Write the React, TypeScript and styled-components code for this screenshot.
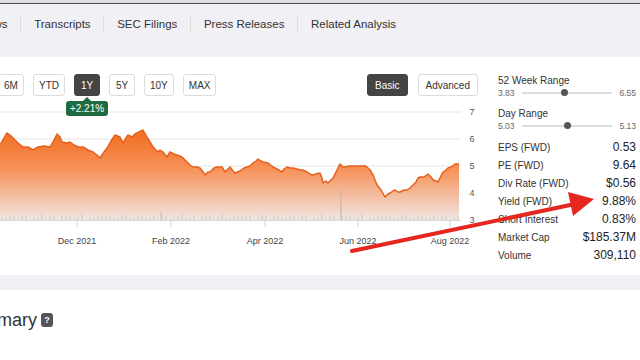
import styled, { createGlobalStyle } from "styled-components";

const GlobalStyle = createGlobalStyle`
  html, body { margin: 0; padding: 0; background: #ffffff; }
  body { font-family: "Liberation Sans", Arial, sans-serif; color: #333; }
`;

const tabs = ["News", "Transcripts", "SEC Filings", "Press Releases", "Related Analysis"];
const periods = ["6M", "YTD", "1Y", "5Y", "10Y", "MAX"];
const ranges = [
  { label: "52 Week Range", low: 3.83, high: 6.55, cur: 5.13 },
  { label: "Day Range", low: 5.03, high: 5.13, cur: 5.08 },
];
const stats = [
  ["EPS (FWD)", "0.53"],
  ["PE (FWD)", "9.64"],
  ["Div Rate (FWD)", "$0.56"],
  ["Yield (FWD)", "9.88%"],
  ["Short Interest", "0.83%"],
  ["Market Cap", "$185.37M"],
  ["Volume", "309,110"],
];

// price line, page coordinates
const pts: [number, number][] = [
  [0, 145], [4, 138], [7, 133], [10, 135], [13, 138], [18, 143], [23, 147], [28, 147],
  [33, 150], [38, 147], [44, 146], [50, 147], [54, 140], [57, 134], [60, 137], [62, 142],
  [67, 143], [70, 142], [74, 145], [78, 147], [83, 147], [88, 150], [93, 152], [97, 155],
  [100, 158], [104, 152], [107, 148], [111, 141], [115, 135], [120, 137], [123, 143],
  [126, 138], [128, 135], [132, 137], [135, 134], [137, 133], [141, 131], [143, 130],
  [147, 137], [150, 142], [153, 147], [158, 152], [160, 150], [163, 152], [167, 157],
  [170, 152], [174, 154], [177, 155], [182, 157], [187, 162], [190, 165], [193, 167],
  [197, 167], [200, 168], [203, 172], [205, 175], [208, 172], [210, 172], [214, 168],
  [217, 167], [222, 167], [225, 172], [228, 169], [230, 167], [233, 171], [235, 173],
  [240, 171], [244, 168], [247, 167], [250, 166], [253, 163], [256, 161], [258, 159],
  [261, 161], [263, 162], [268, 163], [273, 167], [277, 169], [282, 172], [284, 169],
  [287, 167], [290, 168], [293, 168], [297, 169], [300, 170], [303, 170], [307, 172],
  [310, 174], [312, 175], [316, 174], [320, 173], [322, 178], [323, 183], [326, 181],
  [328, 183], [331, 180], [333, 178], [336, 172], [338, 168], [340, 164], [343, 167],
  [345, 167], [349, 166], [353, 166], [357, 166], [362, 166], [365, 166], [367, 167],
  [370, 170], [373, 175], [375, 180], [377, 185], [381, 190], [385, 197], [388, 194],
  [390, 193], [393, 191], [395, 190], [398, 192], [400, 192], [404, 190], [407, 190],
  [410, 188], [413, 185], [416, 182], [418, 178], [420, 177], [424, 177], [428, 174],
  [431, 177], [433, 180], [436, 181], [438, 182], [441, 176], [443, 172], [446, 170],
  [448, 168], [451, 167], [455, 164], [459, 164],
];

const linePath = "M" + pts.map(([x, y]) => `${x},${y}`).join(" L");
const areaPath = linePath + " L459,220 L0,220 Z";

const bars = Array.from({ length: 115 }, (_, i) => ({
  x: i * 4 + 1.5,
  h: 1 + ((i * 37) % 7) * 0.55 + ((i * 13) % 5 === 0 ? 2 : 0),
}));

const gridY = [
  { v: "7", y: 112 },
  { v: "6", y: 139 },
  { v: "5", y: 166 },
  { v: "4", y: 193 },
  { v: "3", y: 220 },
];

const months = [
  { label: "Dec 2021", x: 77 },
  { label: "Feb 2022", x: 171 },
  { label: "Apr 2022", x: 265 },
  { label: "Jun 2022", x: 358 },
  { label: "Aug 2022", x: 450 },
];

export default function App() {
  return (
    <Page>
      <GlobalStyle />
      <TopStrip />
      <TopBar>
        <Tabs>
          {tabs.map((t, i) => (
            <Tab key={t} $first={i === 0}>
              {t}
            </Tab>
          ))}
        </Tabs>
      </TopBar>

      <Panel>
        <ChartCol>
          <Controls>
            <Periods>
              {periods.map((p) => (
                <Btn key={p} $active={p === "1Y"}>
                  {p}
                </Btn>
              ))}
            </Periods>
            <Modes>
              <Btn $active $pad={7}>
                Basic
              </Btn>
              <Btn $pad={7}>Advanced</Btn>
            </Modes>
          </Controls>

          <ChartWrap>
            <Change>+2.21%</Change>
            <svg width="478" height="155" viewBox="0 104 478 155">
              <defs>
                <linearGradient id="fill" gradientUnits="userSpaceOnUse" x1="0" y1="128" x2="0" y2="220">
                  <stop offset="0" stopColor="#f26a1c" />
                  <stop offset="0.45" stopColor="#f6925a" />
                  <stop offset="1" stopColor="#f1e6e1" />
                </linearGradient>
              </defs>
              {gridY.map((g) => (
                <g key={g.v}>
                  <line x1="0" x2="461" y1={g.y} y2={g.y} stroke="#e6e6e6" strokeWidth="1" />
                  <text x="472" y={g.y + 3} fontSize="9" fill="#555" textAnchor="middle">
                    {g.v}
                  </text>
                </g>
              ))}
              <path d={areaPath} fill="url(#fill)" />
              <path d={linePath} fill="none" stroke="#e5601a" strokeWidth="1.5" strokeLinejoin="round" />
              {bars.map((b, i) => (
                <rect key={i} x={b.x} y={220 - b.h} width="1" height={b.h} fill="#c9c4c2" />
              ))}
              <rect x="340.5" y="190" width="1" height="30" fill="#b9b4b2" />
              <rect x="160.5" y="211" width="1" height="9" fill="#c4bfbd" />
              <line x1="0" x2="461" y1="220.5" y2="220.5" stroke="#d8d8d8" />
              {months.map((m) => (
                <g key={m.label}>
                  <line x1={m.x} x2={m.x} y1="220" y2="227" stroke="#d0d0d0" />
                  <text x={m.x} y="244" fontSize="9" fill="#444" textAnchor="middle">
                    {m.label}
                  </text>
                </g>
              ))}
            </svg>
          </ChartWrap>
        </ChartCol>

        <Stats>
          {ranges.map((r) => (
            <RangeBlock key={r.label}>
              <Label>{r.label}</Label>
              <RangeRow>
                <Small>{r.low.toFixed(2)}</Small>
                <Track>
                  <Dot style={{ left: `${((r.cur - r.low) / (r.high - r.low)) * 100}%` }} />
                </Track>
                <Small>{r.high.toFixed(2)}</Small>
              </RangeRow>
            </RangeBlock>
          ))}
          <StatList>
            {stats.map(([k, v]) => (
              <StatRow key={k}>
                <Label>{k}</Label>
                <Value>{v}</Value>
              </StatRow>
            ))}
          </StatList>
        </Stats>
      </Panel>

      <Band />

      <Summary>
        <Title>Summary</Title>
        <Help>?</Help>
      </Summary>

      <Arrow width="640" height="360" viewBox="0 0 640 360">
        <line x1="352" y1="251" x2="575" y2="204" stroke="#e5271f" strokeWidth="4" strokeLinecap="round" />
        <polygon points="594,199 568,192 573,216" fill="#e5271f" />
      </Arrow>
    </Page>
  );
}

const Page = styled.div`
  position: relative;
  width: 640px;
  height: 360px;
  overflow: hidden;
  display: flex;
  flex-direction: column;
  background: #fff;
`;

const TopStrip = styled.div`
  height: 3px;
  background: #dedee3;
`;

const TopBar = styled.div`
  height: 54px;
  border-top: 1px solid #4c4c52;
  background: #f0f0f5;
  padding-top: 13px;
  box-sizing: border-box;
`;

const Tabs = styled.div`
  display: flex;
  align-items: center;
  margin-left: -34px;
  white-space: nowrap;
`;

const Tab = styled.div<{ $first?: boolean }>`
  font-size: 11.5px;
  line-height: 14px;
  color: #333;
  padding: 0 12.8px;
  border-left: ${(p) => (p.$first ? "none" : "1px solid #dadade")};
`;

const Panel = styled.div`
  display: flex;
  height: 218px;
  background: #fff;
`;

const ChartCol = styled.div`
  width: 478px;
  margin-right: 20px;
  padding-top: 17px;
  box-sizing: border-box;
`;

const Controls = styled.div`
  display: flex;
  justify-content: space-between;
  height: 22px;
`;

const Periods = styled.div`
  display: flex;
  gap: 9px;
  margin-left: -2px;
`;

const Modes = styled.div`
  display: flex;
  gap: 10px;
`;

const Btn = styled.div<{ $active?: boolean; $pad?: number }>`
  min-width: 26px;
  height: 22px;
  box-sizing: border-box;
  padding: 0 ${(p) => p.$pad ?? 5}px;
  display: flex;
  align-items: center;
  justify-content: center;
  font-size: 10px;
  border-radius: 3px;
  border: 1px solid ${(p) => (p.$active ? "#444" : "#dcdcdc")};
  background: ${(p) => (p.$active ? "#444" : "#fff")};
  color: ${(p) => (p.$active ? "#fff" : "#333")};
`;

const ChartWrap = styled.div`
  position: relative;
  margin-top: 8px;
  height: 155px;
  svg {
    display: block;
  }
`;

const Change = styled.div`
  position: absolute;
  left: 66px;
  top: -3px;
  width: 42px;
  height: 15px;
  border-radius: 3px;
  background: #1f6b40;
  color: #fff;
  font-size: 10px;
  display: flex;
  align-items: center;
  justify-content: center;
  &::before {
    content: "";
    position: absolute;
    top: -4px;
    left: 17px;
    border-left: 4px solid transparent;
    border-right: 4px solid transparent;
    border-bottom: 4px solid #1f6b40;
  }
`;

const Stats = styled.div`
  width: 138px;
  padding-top: 17px;
  box-sizing: border-box;
`;

const RangeBlock = styled.div`
  margin-bottom: 9px;
`;

const Label = styled.div`
  font-size: 10px;
  line-height: 13px;
  color: #333;
  white-space: nowrap;
`;

const RangeRow = styled.div`
  display: flex;
  align-items: center;
  height: 11px;
`;

const Small = styled.span`
  font-size: 8.5px;
  color: #666;
`;

const Track = styled.div`
  position: relative;
  flex: 1;
  height: 2px;
  margin: 0 7px;
  background: #dcdcdc;
`;

const Dot = styled.div`
  position: absolute;
  top: -2.5px;
  width: 7px;
  height: 7px;
  margin-left: -3.5px;
  border-radius: 50%;
  background: #555;
`;

const StatList = styled.div`
  margin-top: -2px;
`;

const StatRow = styled.div`
  display: flex;
  justify-content: space-between;
  align-items: center;
  height: 18px;
`;

const Value = styled.div`
  font-size: 12px;
  color: #222;
`;

const Band = styled.div`
  height: 15px;
  background: #f0f0f5;
`;

const Summary = styled.div`
  display: flex;
  align-items: center;
  gap: 4px;
  height: 24px;
  margin-top: 18px;
  margin-left: -40px;
`;

const Title = styled.div`
  font-size: 18px;
  line-height: 24px;
  color: #333;
`;

const Help = styled.div`
  width: 12px;
  height: 14px;
  border-radius: 3px;
  background: #555;
  color: #fff;
  font-size: 9px;
  font-weight: bold;
  display: flex;
  align-items: center;
  justify-content: center;
`;

const Arrow = styled.svg`
  position: absolute;
  left: 0;
  top: 0;
  pointer-events: none;
`;
